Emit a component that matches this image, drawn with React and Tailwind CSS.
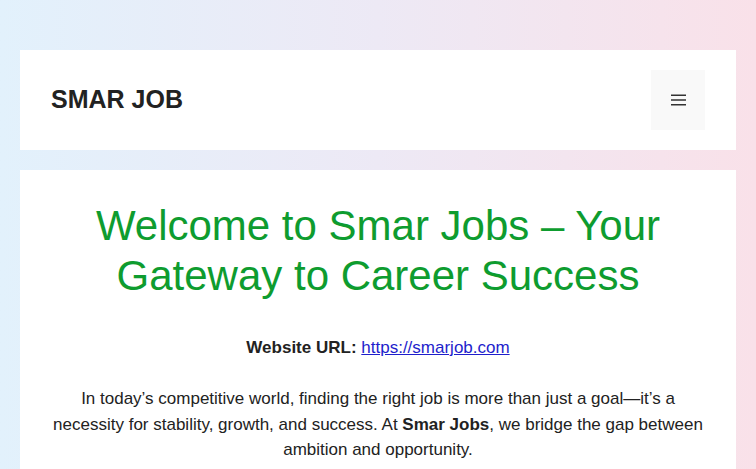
export default function App() {
  return (
    <div
      className="min-h-[469px] w-full bg-gradient-to-r from-[#e2f1fc] via-[#ede9f5] to-[#f9e1e9] pt-[50px] px-[20px]"
      style={{ fontFamily: '"Liberation Sans", Arial, sans-serif' }}
    >
      <header className="bg-white h-[100px] flex items-center justify-between pl-[31px] pr-[31px]">
        <div className="text-[25px] font-bold text-[#222222]">SMAR JOB</div>
        <button className="w-[54px] h-[60px] bg-[#f9f9f9] flex items-center justify-center">
          <svg width="15" height="12" viewBox="0 0 15 12">
            <rect x="0" y="0.5" width="15" height="1.5" fill="#333" />
            <rect x="0" y="5.25" width="15" height="1.5" fill="#333" />
            <rect x="0" y="10" width="15" height="1.5" fill="#333" />
          </svg>
        </button>
      </header>
      <main className="bg-white mt-[20px] px-[30px] pt-[31px] pb-[40px] text-center">
        <h1 className="text-[42px] leading-[50px] text-[#0e9c2f] font-normal">
          Welcome to Smar Jobs – Your Gateway to Career Success
        </h1>
        <p className="mt-[34px] text-[17px] leading-[26px] text-[#222222]">
          <strong>Website URL:</strong>{" "}
          <a href="#" className="text-[#1e1ecc] underline">https://smarjob.com</a>
        </p>
        <p className="mt-[25px] text-[17px] leading-[25.5px] text-[#222222]">
          In today’s competitive world, finding the right job is more than just a goal—it’s a necessity for stability, growth, and success. At <strong>Smar Jobs</strong>, we bridge the gap between ambition and opportunity.
        </p>
      </main>
    </div>
  );
}
